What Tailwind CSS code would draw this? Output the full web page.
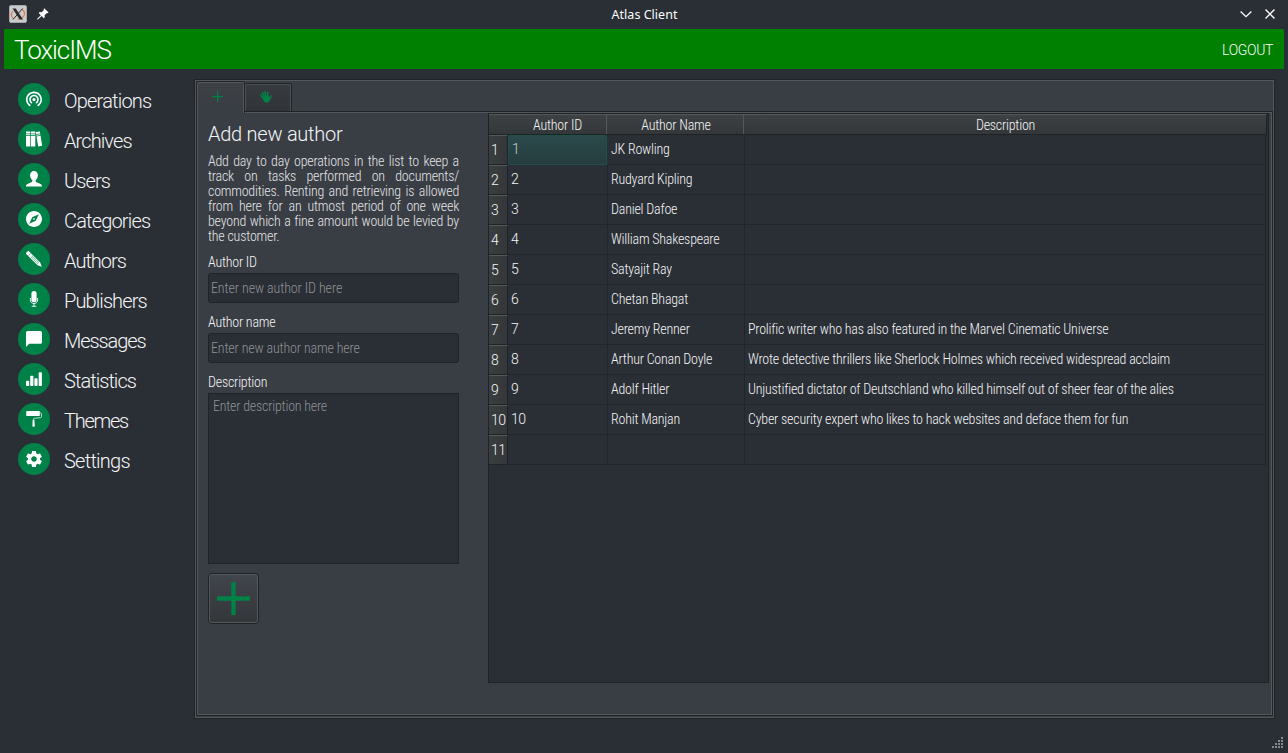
<!DOCTYPE html>
<html lang="en">
<head>
<meta charset="utf-8">
<title>Atlas Client</title>
<script src="https://cdn.jsdelivr.net/npm/@tailwindcss/browser@4"></script>
</head>
<body class="w-[1288px] h-[753px] overflow-hidden bg-[#2a2e35] flex flex-col text-[#f4f5f6] font-[Roboto_Condensed,Roboto,sans-serif] font-[330] text-[14px] leading-[15px] tracking-[-0.22px] whitespace-nowrap">

<!-- Title bar -->
<header class="h-[29px] shrink-0 flex items-center pl-[9px] pr-[10px] pb-px text-[#fcfcfc]">
  <svg class="w-[18px] h-[18px]" viewBox="0 0 18 18"><rect x=".5" y=".5" width="17" height="17" rx="1.5" fill="#c9cbcd" stroke="#a5a9ac"/><path d="M4 6C1.800 8.500 1.800 12 4.500 13.500M8.500 14.300c4 0 7-2.500 7-5.800 0-2-1-3.300-2.500-4" fill="none" stroke="#e8733a" stroke-width="1.100"/><path d="M3.500 3.500h3.300l7.200 11h-3.300z" fill="#2b2b2b"/><path d="M13.600 3.500L4 14.500" stroke="#2b2b2b" stroke-width="1"/></svg>
  <svg class="ml-[10px] w-[12px] h-[12px]" viewBox="0 0 12 12" fill="#fcfcfc"><path d="M7.300 .3l4.300 4.300-1 .7-.7-.3-2.300 2.300.2 1.900-1 1L4.600 8 .9 11.500H.2v-.7L3.800 7.200 1.700 5.100l1-1 1.900.2L7 2l-.4-.8z"/></svg>
  <div class="flex-1 text-center pt-[2px] font-[Noto_Sans,sans-serif] font-normal text-[12.5px] leading-[18px] tracking-[0.02px]">Atlas Client</div>
  <svg class="w-[12px] h-[8px]" viewBox="0 0 12 8" fill="none" stroke="#fcfcfc" stroke-width="1.300"><path d="M.6 1.500L6 6.700l5.400-5.200"/></svg>
  <svg class="ml-[13px] mr-[3px] w-[10px] h-[10px]" viewBox="0 0 10 10" fill="none" stroke="#fcfcfc" stroke-width="1.400"><path d="M.5 .5l9 9M9.500 .5l-9 9"/></svg>
</header>

<!-- Brand bar -->
<div class="mx-1 h-[40px] shrink-0 bg-[#008000] flex items-center justify-between pl-[10px] pr-[11px] font-[Roboto,sans-serif]">
  <h1 class="text-[26px] leading-[38px] pt-[2px] tracking-[-1.05px] text-white font-light">ToxicIMS</h1>
  <button class="text-[14px] leading-[20px] tracking-[-0.35px] pt-[2px] text-white font-light">LOGOUT</button>
</div>

<div class="flex flex-1 pt-[10px]">
  <!-- Sidebar -->
  <nav class="w-[194px] shrink-0 pl-[18px] pt-1 flex flex-col gap-2 font-[Roboto,sans-serif] font-light text-[20px] tracking-[-0.9px]">
    <a class="flex items-center gap-[14px] h-8"><span class="size-8 rounded-full bg-[#008148] grid place-items-center"><svg class="size-4" viewBox="2 2.300 20 20" fill="#fff"><path d="M12 11c-1.100 0-2 .9-2 2s.9 2 2 2 2-.9 2-2-.9-2-2-2zm6 2c0-3.310-2.690-6-6-6s-6 2.690-6 6c0 2.220 1.210 4.150 3 5.190l1-1.740c-1.190-.7-2-1.970-2-3.450 0-2.210 1.790-4 4-4s4 1.790 4 4c0 1.480-.81 2.750-2 3.450l1 1.740c1.790-1.040 3-2.970 3-5.190zM12 3C6.480 3 2 7.480 2 13c0 3.700 2.010 6.920 4.990 8.650l1-1.730C5.610 18.530 4 15.960 4 13c0-4.420 3.580-8 8-8s8 3.580 8 8c0 2.960-1.610 5.530-4 6.920l1 1.730c2.990-1.730 5-4.950 5-8.650 0-5.520-4.480-10-10-10z"/></svg></span><span class="leading-8 pt-[3px] tracking-[-0.8px]">Operations</span></a>
    <a class="flex items-center gap-[14px] h-8"><span class="size-8 rounded-full bg-[#008148] grid place-items-center"><svg class="size-4" viewBox="0 0 16 16" fill="#fff"><path d="M0 .5h4.300v2H0zM0 3.300h4.300v.9H0zM0 5h4.300v10.500H0zM5 .5h4.300v2H5zM5 3.300h4.300v.9H5zM5 5h4.300v10.500H5zM9.800 1l4-.6.4 2-4 .6zM10.200 3.800l4.100-.6.2.9-4.100.6zM10.500 5.400l4.100-.6 1.600 9.900-4 .7z"/></svg></span><span class="leading-8 pt-[3px]">Archives</span></a>
    <a class="flex items-center gap-[14px] h-8"><span class="size-8 rounded-full bg-[#008148] grid place-items-center"><svg class="size-4" viewBox="0 0 16 16" fill="#fff"><path d="M8 0c2.300 0 3.900 1.700 3.900 4.200 0 2-.9 3.900-2.200 4.900v1.100c0 .5.3.8.8 1l3.600 1.500c1.200.5 1.900 1.300 1.900 2.500v.4H0v-.4c0-1.200.7-2 1.900-2.500l3.600-1.500c.5-.2.800-.5.800-1V9.100C5 8.100 4.100 6.200 4.100 4.200 4.100 1.700 5.700 0 8 0z"/></svg></span><span class="leading-8 pt-[3px]">Users</span></a>
    <a class="flex items-center gap-[14px] h-8"><span class="size-8 rounded-full bg-[#008148] grid place-items-center"><svg class="size-4" viewBox="2 2 20 20" fill="#fff"><path d="M12 10.900c-.61 0-1.100.49-1.100 1.100s.49 1.100 1.100 1.100c.61 0 1.100-.49 1.100-1.100s-.49-1.100-1.100-1.100zM12 2C6.480 2 2 6.480 2 12s4.480 10 10 10 10-4.480 10-10S17.520 2 12 2zm2.190 12.190L6 18l3.810-8.190L18 6l-3.810 8.190z"/></svg></span><span class="leading-8 pt-[3px] tracking-[-0.83px]">Categories</span></a>
    <a class="flex items-center gap-[14px] h-8"><span class="size-8 rounded-full bg-[#008148] grid place-items-center"><svg class="size-4" viewBox="0 0 16 16"><path d="M.4 1.600L1.600.4c.5-.5 1.100-.5 1.600 0l11 11.200 1.600 4.200-4.200-1.600L.4 3.200c-.5-.5-.5-1.100 0-1.600z" fill="#fff"/><path d="M2.500 4.700l2.200-2.200M4.700 5.500l7.300 7.300M5.700 4.400l7.300 7.300" stroke="#008148" stroke-width=".6"/></svg></span><span class="leading-8 pt-[3px] tracking-[-1px]">Authors</span></a>
    <a class="flex items-center gap-[14px] h-8"><span class="size-8 rounded-full bg-[#008148] grid place-items-center"><svg class="size-4" viewBox="0 0 16 16"><rect x="5.400" y="0" width="5.200" height="11.300" rx="2.600" fill="#fff"/><path d="M4.400 7v1.800c0 2.400 1.500 3.800 3.600 3.800s3.600-1.400 3.600-3.800V7M8 12.600v2.600M5.700 15.300h4.600" fill="none" stroke="#fff" stroke-width=".9"/></svg></span><span class="leading-8 pt-[3px]">Publishers</span></a>
    <a class="flex items-center gap-[14px] h-8"><span class="size-8 rounded-full bg-[#008148] grid place-items-center"><svg class="size-4" viewBox="2 2 20 20" fill="#fff"><path d="M20 2H4c-1.100 0-2 .9-2 2v18l4-4h14c1.100 0 2-.9 2-2V4c0-1.100-.9-2-2-2z"/></svg></span><span class="leading-8 pt-[3px] tracking-[-1.1px]">Messages</span></a>
    <a class="flex items-center gap-[14px] h-8"><span class="size-8 rounded-full bg-[#008148] grid place-items-center"><svg class="size-4" viewBox="0 0 16 16" fill="#fff"><rect x="0" y="9.700" width="3.200" height="5.300" rx=".8"/><rect x="4.200" y="4.700" width="3.200" height="10.300" rx=".8"/><rect x="8.400" y="7.200" width="3.200" height="7.800" rx=".8"/><rect x="12.700" y="1.300" width="3.200" height="13.700" rx=".8"/></svg></span><span class="leading-8 pt-[3px] tracking-[-0.95px]">Statistics</span></a>
    <a class="flex items-center gap-[14px] h-8"><span class="size-8 rounded-full bg-[#008148] grid place-items-center"><svg class="size-4" viewBox="0 0 16 16" fill="#fff"><rect x=".2" y="0" width="13.600" height="5.100" rx=".8"/><path d="M13.500 2h1.200c.6 0 .8.3.8.8v2.700c0 .7-.3 1-.9 1.100l-6.300.7c-.5.1-.8.300-.8.800v1" fill="none" stroke="#fff" stroke-width=".7"/><path d="M6.700 8.800h1.700l.4 6c0 .6-.4 1-1.200 1s-1.300-.4-1.200-1z"/></svg></span><span class="leading-8 pt-[3px] tracking-[-1.25px]">Themes</span></a>
    <a class="flex items-center gap-[14px] h-8"><span class="size-8 rounded-full bg-[#008148] grid place-items-center"><svg class="size-4" viewBox="2 2 20 20" fill="#fff"><path d="M19.430 12.980c.04-.32.07-.64.07-.98s-.03-.66-.07-.98l2.110-1.650c.19-.15.24-.42.12-.64l-2-3.460c-.12-.22-.39-.3-.61-.22l-2.490 1c-.52-.4-1.080-.73-1.690-.98l-.38-2.650C14.460 2.180 14.250 2 14 2h-4c-.25 0-.46.18-.49.42l-.38 2.650c-.61.25-1.170.59-1.690.98l-2.490-1c-.23-.09-.49 0-.61.22l-2 3.460c-.13.22-.07.49.12.64l2.110 1.650c-.04.32-.07.65-.07.98s.03.66.07.98l-2.110 1.650c-.19.15-.24.42-.12.64l2 3.460c.12.22.39.3.61.22l2.490-1c.52.4 1.080.73 1.690.98l.38 2.650c.03.24.24.42.49.42h4c.25 0 .46-.18.49-.42l.38-2.650c.61-.25 1.170-.59 1.690-.98l2.490 1c.23.09.49 0 .61-.22l2-3.460c.12-.22.07-.49-.12-.64l-2.110-1.650zM12 15.500c-1.930 0-3.500-1.570-3.500-3.500s1.570-3.500 3.500-3.500 3.500 1.570 3.500 3.500-1.570 3.500-3.500 3.500z"/></svg></span><span class="leading-8 pt-[3px] tracking-[-0.75px]">Settings</span></a>
  </nav>

  <!-- Outer frame -->
  <main class="w-[1081px] h-[640px] border border-[#1f2326]">
    <div class="h-full border border-[#53585b] bg-[#393d44] flex flex-col">
      <!-- Tabs -->
      <div class="h-[30px] shrink-0 flex items-start relative z-10">
        <div class="w-[49px] h-[32px] border border-b-0 border-[#1f2326] rounded-t-[3px]">
          <div class="h-[31px] border border-b-0 border-[#53585b] rounded-t-[2px] bg-linear-to-b from-[#3d4145] to-[#393d44] pl-[14px] pt-[8px]">
            <svg class="size-[11px]" viewBox="0 0 11 11" fill="#008148"><path d="M5 .3h1.300V5H11v1.300H6.300V11H5V6.300H.3V5H5z"/></svg>
          </div>
        </div>
        <div class="mt-[2px] w-[47px] h-[28px] border border-b-0 border-l-0 border-[#1f2326] rounded-t-[3px]">
          <div class="h-full border border-b-0 border-[#4b5053] rounded-t-[2px] bg-linear-to-b from-[#373b3f] to-[#303438] pl-[14px] pt-[6px]">
            <svg class="size-[12px]" viewBox="0 0 22 22" fill="#008148" stroke="#008148" stroke-linecap="round"><path d="M4 10l12-1 1.500 3 2.500-4c1-1 2.300 0 1.800 1.200L18 18c-2 4-8 4.500-11 1z" stroke="none"/><path d="M5.500 13L1.500 7M8 11L4.500 3M11 10L9 1.500M14.500 11L14 3" stroke-width="2.800"/></svg>
          </div>
        </div>
      </div>
      <!-- Tab pane -->
      <div class="h-[605px] w-[1077px] border border-[#1f2326]">
        <div class="h-full border border-[#53585b] flex">
          <section class="w-[290px] shrink-0 pl-[10px] pt-[10px]">
            <h2 class="font-[Roboto,sans-serif] font-light text-[20px] leading-[22px] tracking-[-0.25px]">Add new author</h2>
            <p class="mt-[9px] w-[251px] text-[#e4e5e7]">
              <span class="block [text-align-last:justify]">Add day to day operations in the list to keep a</span>
              <span class="block [text-align-last:justify]">track on tasks performed on documents/</span>
              <span class="block [text-align-last:justify]">commodities. Renting and retrieving is allowed</span>
              <span class="block [text-align-last:justify]">from here for an utmost period of one week</span>
              <span class="block [text-align-last:justify]">beyond which a fine amount would be levied by</span>
              <span class="block">the customer.</span>
            </p>
            <label class="block mt-[11px] h-[18px]">Author ID</label>
            <div class="w-[251px] h-[30px] border border-[#1f2326] rounded-[3px] bg-[#2a2e35] text-[#8e9194] px-[2px] leading-[29px] tracking-[-0.1px]">Enter new author ID here</div>
            <label class="block mt-[12px] h-[18px]">Author name</label>
            <div class="w-[251px] h-[30px] border border-[#1f2326] rounded-[3px] bg-[#2a2e35] text-[#8e9194] px-[2px] leading-[29px] tracking-[-0.15px]">Enter new author name here</div>
            <label class="block mt-[12px] h-[18px]">Description</label>
            <div class="w-[251px] h-[171px] border border-[#1f2326] bg-[#2a2e35] text-[#8e9194] px-[4px] pt-[5px]">Enter description here</div>
            <button class="mt-[9px] block size-[51px] border border-[#1f2326] rounded-[4px]"><span class="block pl-[6.500px] pt-[6.500px] size-[49px] border border-[#53585b] rounded-[3px] bg-linear-to-b from-[#41454c] to-[#33373a]"><svg class="size-[33px]" viewBox="0 0 33 33" fill="#008148"><path d="M14.300 0h4.400v14.300H33v4.400H18.700V33h-4.400V18.700H0v-4.400h14.300z"/></svg></span></button>
          </section>
          <!-- Authors table -->
          <section class="w-[781px] shrink-0 h-[570px] border border-[#1f2326] bg-[#2a2e35]">
            <div id="grid" class="w-[778px]">
              <div class="flex h-[21px] border-t border-b border-t-[#53585b] border-b-[#1f2326] border-r border-r-[#1f2326] bg-linear-to-b from-[#3d4144] to-[#33373a] text-center leading-[20px]">
                <div class="w-[118px] pl-[20px] border-r border-[#53585b]">Author ID</div>
                <div class="w-[137px] pl-[2px] border-r border-[#53585b]">Author Name</div>
                <div class="flex-1 pl-px">Description</div>
              </div>
            </div>
          </section>
        </div>
      </div>
    </div>
  </main>
</div>

<!-- Resize grip -->
<svg class="absolute right-[5px] bottom-[5px] w-[12px] h-[12px]" viewBox="0 0 12 12" fill="#85888b"><path d="M10 1h2v2h-2zM7 4h2v2H7zM10 4h2v2h-2zM4 7h2v2H4zM7 7h2v2H7zM10 7h2v2h-2zM1 10h2v2H1zM4 10h2v2H4zM7 10h2v2H7zM10 10h2v2h-2z"/></svg>

<script>
const authors = [
  ["JK Rowling", ""], ["Rudyard Kipling", ""], ["Daniel Dafoe", ""], ["William Shakespeare", ""],
  ["Satyajit Ray", ""], ["Chetan Bhagat", ""],
  ["Jeremy Renner", "Prolific writer who has also featured in the Marvel Cinematic Universe"],
  ["Arthur Conan Doyle", "Wrote detective thrillers like Sherlock Holmes which received widespread acclaim"],
  ["Adolf Hitler", "Unjustified dictator of Deutschland who killed himself out of sheer fear of the alies"],
  ["Rohit Manjan", "Cyber security expert who likes to hack websites and deface them for fun"],
  ["", ""]
];
document.getElementById("grid").insertAdjacentHTML("beforeend", authors.map(([name, about], i) => `
  <div class="flex h-[30px] leading-[29px]">
    <div class="w-[19px] shrink-0 border-t border-t-[#53585b] border-b border-b-[#1f2326] border-r border-r-[#1f2326] bg-linear-to-r from-[#3a3e41] to-[#33373a] pl-[2px] font-[Roboto,sans-serif] tracking-[-0.4px]">${i + 1}</div>
    <div class="${i ? "w-[100px] shrink-0 border-r border-b border-[#22262a] pl-[3px] font-[Roboto,sans-serif] tracking-[-0.4px]" : "w-[99px] mr-px shrink-0 border border-[#1f5049] rounded-[2px] bg-linear-to-b from-[#2a4a4a] to-[#263c3f] pl-[3px] leading-[27px] font-[Roboto,sans-serif] text-[#c5cbcb]"}">${name ? i + 1 : ""}</div>
    <div class="w-[137px] shrink-0 border-r border-b border-[#22262a] pl-[3px]">${name}</div>
    <div class="flex-1 mr-px border-r border-b border-[#22262a] pl-[3px]">${about}</div>
  </div>`).join(""));
</script>
</body>
</html>
